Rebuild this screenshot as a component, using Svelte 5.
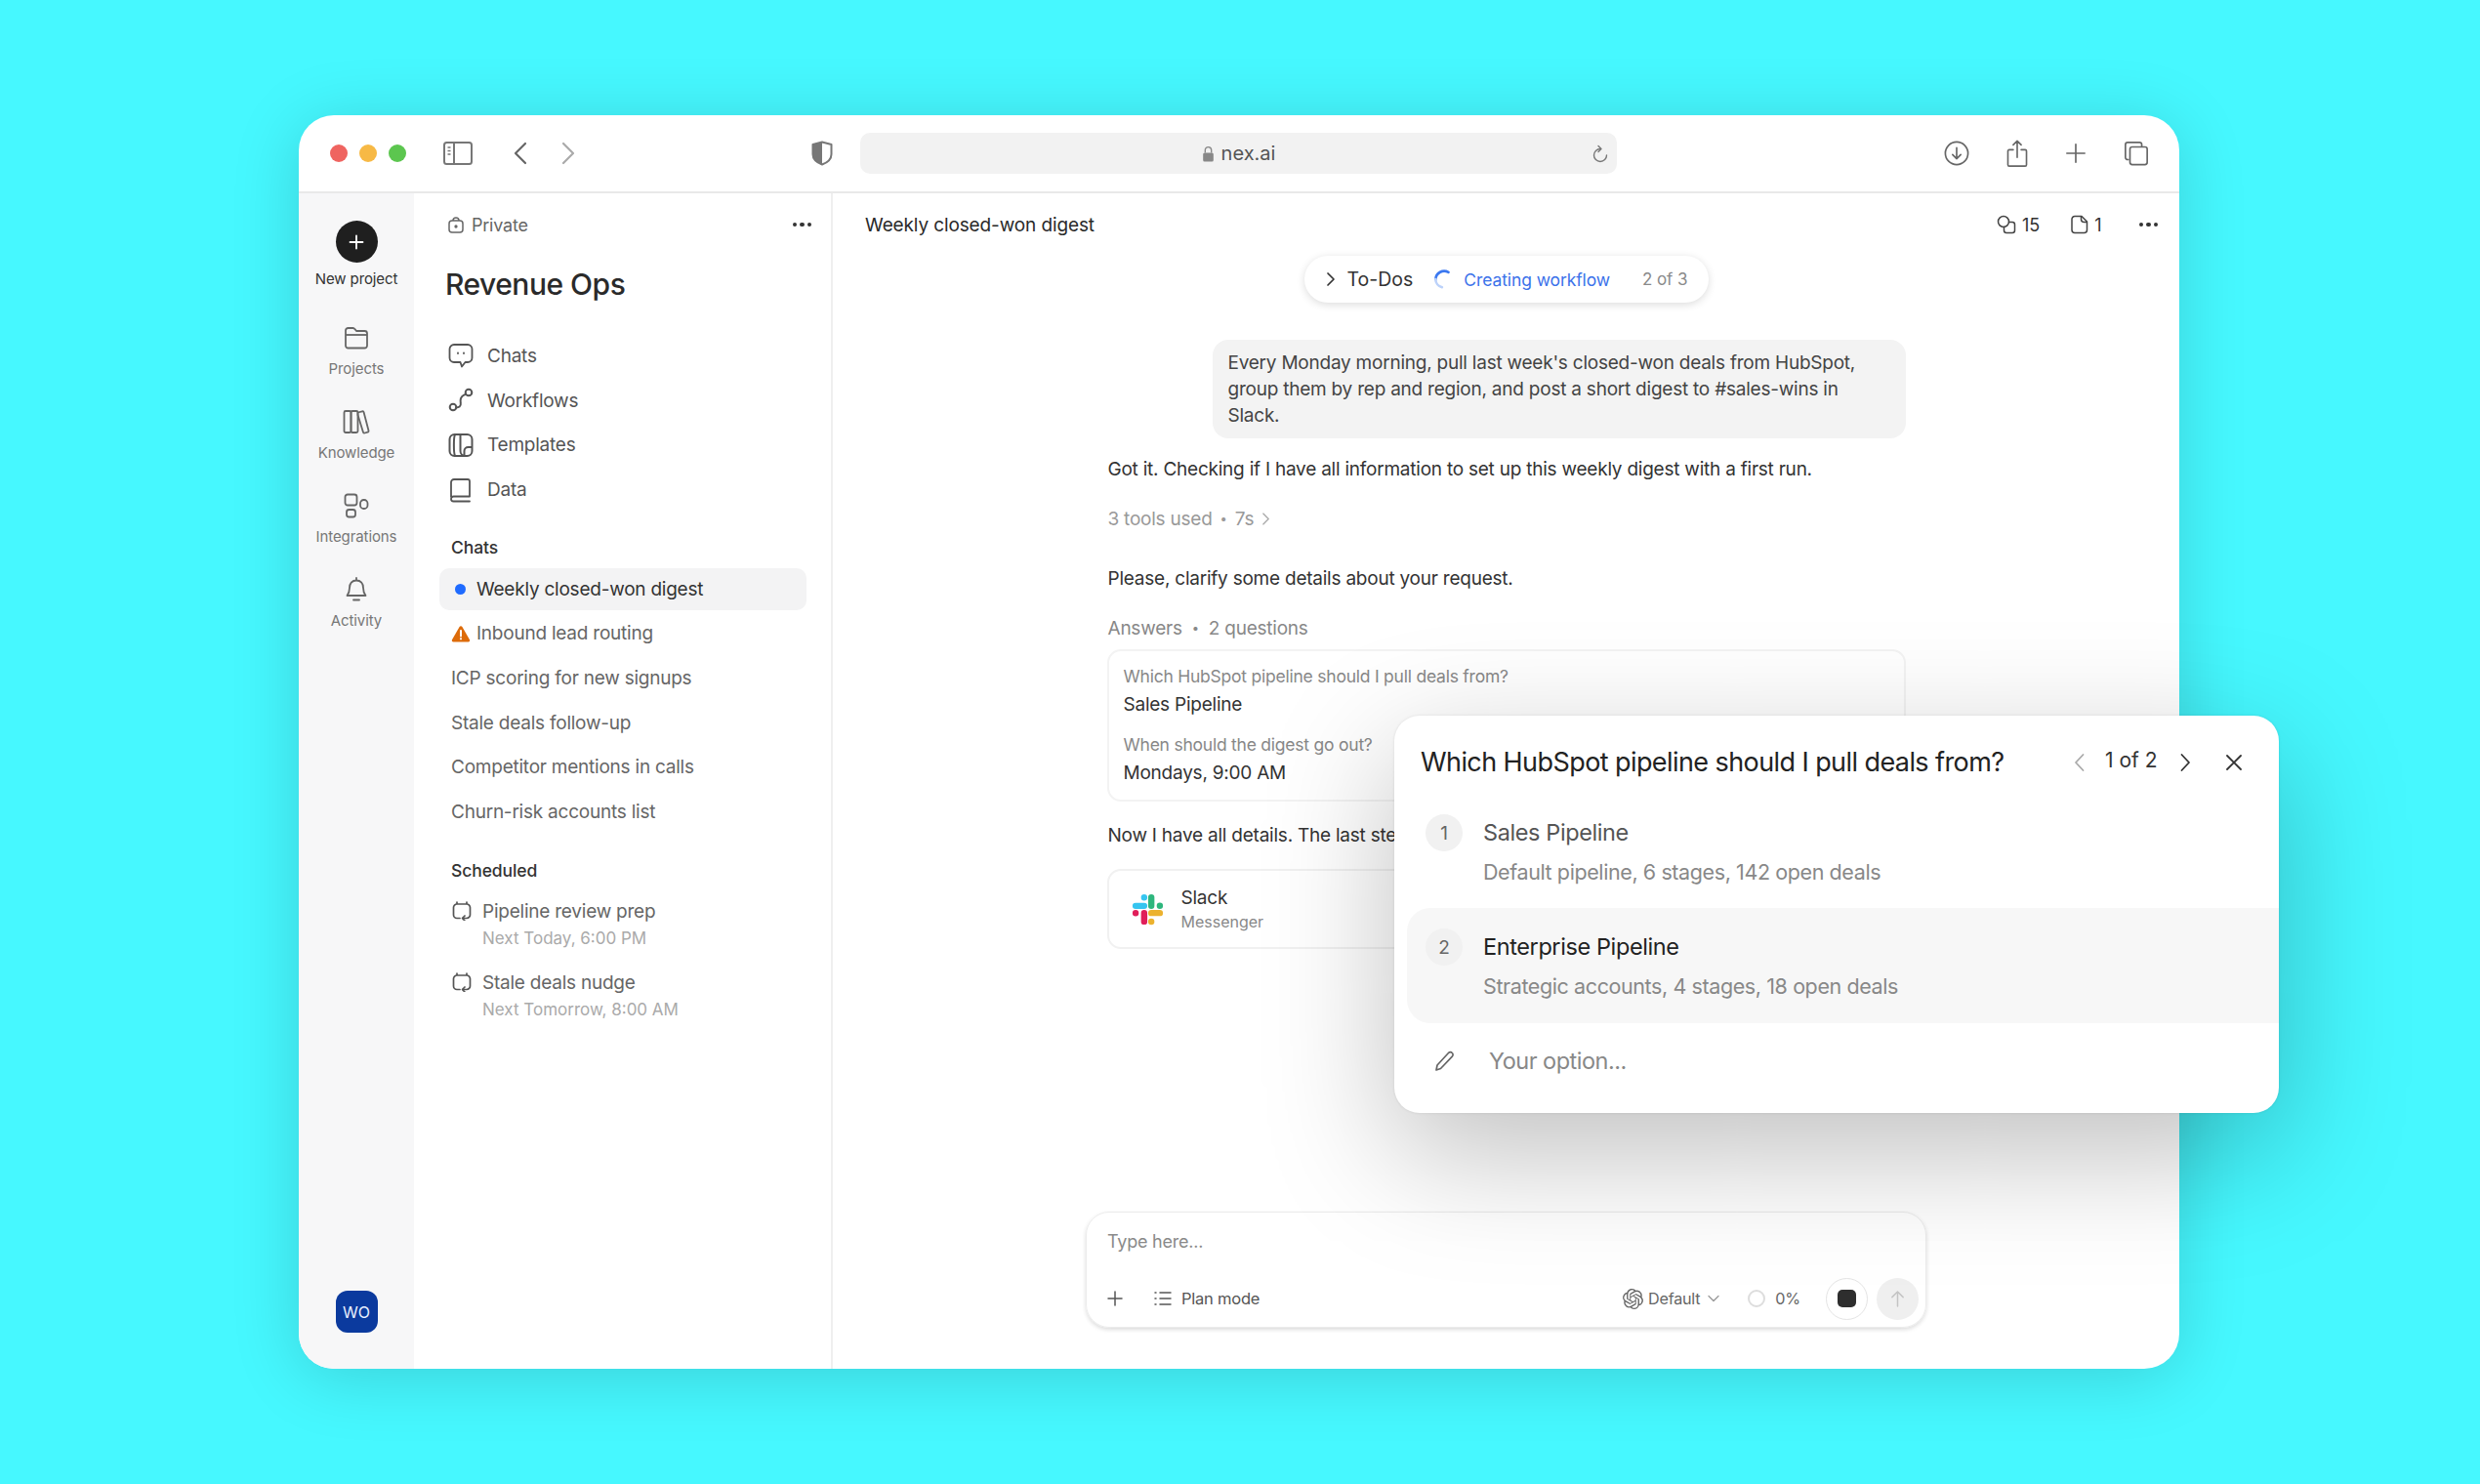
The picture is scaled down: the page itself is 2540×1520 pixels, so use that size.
<script>
  const railItems = [
    { key: 'projects', label: 'Projects' },
    { key: 'knowledge', label: 'Knowledge' },
    { key: 'integrations', label: 'Integrations' },
    { key: 'activity', label: 'Activity' }
  ];
  const nav = ['Chats', 'Workflows', 'Templates', 'Data'];
  const chats = ['ICP scoring for new signups', 'Stale deals follow-up', 'Competitor mentions in calls', 'Churn-risk accounts list'];
  const scheduled = [
    { t: 'Pipeline review prep', s: 'Next Today, 6:00 PM' },
    { t: 'Stale deals nudge', s: 'Next Tomorrow, 8:00 AM' }
  ];
</script>

<div class="window">
  <header class="chrome">
    <div class="lights"><i class="red"></i><i class="yellow"></i><i class="green"></i></div>
    <svg class="ic side" viewBox="0 0 30 26" width="30" height="26" fill="none" stroke="#777" stroke-width="2"><rect x="1" y="2" width="28" height="22" rx="2.5"/><path d="M11 2v22"/><path d="M4.500 7h3M4.500 10.500h3M4.500 14h3" stroke-width="1.500"/></svg>
    <svg class="ic back" viewBox="0 0 16 24" width="16" height="24" fill="none" stroke="#666" stroke-width="2.200" stroke-linecap="round" stroke-linejoin="round"><path d="M13 2 3 12l10 10"/></svg>
    <svg class="ic fwd" viewBox="0 0 16 24" width="16" height="24" fill="none" stroke="#aaa" stroke-width="2.200" stroke-linecap="round" stroke-linejoin="round"><path d="m3 2 10 10L3 22"/></svg>
    <svg class="ic shield" viewBox="0 0 22 26" width="22" height="26"><path d="M11 1.500 20.500 4v10c0 5-4 8.500-9.500 10.500C5.500 22.500 1.500 19 1.500 14V4z" fill="#fff" stroke="#777" stroke-width="2" stroke-linejoin="round"/><path d="M11 1.500 1.500 4v10c0 5 4 8.500 9.500 10.500z" fill="#777"/></svg>
    <div class="url">
      <svg viewBox="0 0 12 16" width="13" height="17"><path d="M3 7V4.500a3 3 0 0 1 6 0V7" fill="none" stroke="#888" stroke-width="1.300"/><rect x="1" y="7" width="10" height="8.500" rx="1.500" fill="#888"/></svg>
      <span>nex.ai</span>
      <svg class="reload" viewBox="0 0 18 20" width="18" height="20" fill="none" stroke="#777" stroke-width="1.400" stroke-linecap="round"><path d="M9 4.500a6.500 6.500 0 1 0 6.500 6.500"/><path d="m7 1.500 3 3-3 3" stroke-linejoin="round"/></svg>
    </div>
    <div class="chrome-right">
      <svg viewBox="0 0 28 28" width="26" height="26" fill="none" stroke="#666" stroke-width="1.800" stroke-linecap="round" stroke-linejoin="round"><circle cx="14" cy="14" r="12.500"/><path d="M14 8v12M9.500 15.500 14 20l4.500-4.500"/></svg>
      <svg viewBox="0 0 24 32" width="22" height="29" fill="none" stroke="#666" stroke-width="1.800" stroke-linecap="round" stroke-linejoin="round"><path d="M7.500 11.500H3a1.500 1.500 0 0 0-1.500 1.500v15.500A1.500 1.500 0 0 0 3 30h18a1.500 1.500 0 0 0 1.500-1.500V13a1.500 1.500 0 0 0-1.500-1.500h-4.500M12 20V2M7.500 6 12 1.500 16.500 6"/></svg>
      <svg viewBox="0 0 24 24" width="22" height="22" fill="none" stroke="#666" stroke-width="1.800" stroke-linecap="round"><path d="M12 2v20M2 12h20"/></svg>
      <svg viewBox="0 0 28 28" width="26" height="26" fill="none" stroke="#666" stroke-width="1.800"><path d="M6 21H4.500A2.500 2.500 0 0 1 2 18.500v-14A2.500 2.500 0 0 1 4.500 2h13A2.500 2.500 0 0 1 20 4.500V7"/><rect x="7" y="7" width="19" height="19.500" rx="2.500"/></svg>
    </div>
  </header>

  <div class="body">
    <nav class="rail">
      <div class="new-btn">
        <svg viewBox="0 0 16 16" width="16" height="16" fill="none" stroke="#fff" stroke-width="1.800" stroke-linecap="round"><path d="M8 1.500v13M1.500 8h13"/></svg>
      </div>
      <div class="new-label">New project</div>
      {#each railItems as r}
        <div class="rail-item">
          {#if r.key === 'projects'}
            <svg viewBox="0 0 26 26" width="26" height="26" fill="none" stroke="#666" stroke-width="1.800" stroke-linejoin="round"><path d="M2 10V5.500A2.500 2.500 0 0 1 4.500 3h5c1 0 1.500.5 2 1.200L13 6h8.500A2.500 2.500 0 0 1 24 8.500V21a2.500 2.500 0 0 1-2.500 2.500h-17A2.500 2.500 0 0 1 2 21z"/><path d="M2 10h22"/></svg>
          {:else if r.key === 'knowledge'}
            <svg viewBox="0 0 28 26" width="28" height="26" fill="none" stroke="#666" stroke-width="1.800" stroke-linejoin="round"><rect x="1.500" y="2" width="7" height="22" rx="1.500"/><rect x="8.500" y="2" width="7" height="22" rx="1.500"/><path d="m15.500 3.500 4.500-1.200c.8-.2 1.400.2 1.600 1L26.500 22c.2.800-.2 1.500-1 1.700l-3 .8c-.8.2-1.400-.2-1.600-1L15.500 6z"/></svg>
          {:else if r.key === 'integrations'}
            <svg viewBox="0 0 26 26" width="26" height="26" fill="none" stroke="#666" stroke-width="1.800"><rect x="1.500" y="1.500" width="12" height="11" rx="2.500"/><rect x="3" y="17" width="9" height="7.500" rx="2.500"/><rect x="17" y="7" width="7.500" height="9" rx="3.500"/></svg>
          {:else}
            <svg viewBox="0 0 24 26" width="24" height="26" fill="none" stroke="#666" stroke-width="1.800" stroke-linecap="round" stroke-linejoin="round"><path d="M12 1v2.500M12 3.500c-4.500 0-7 3.200-7 7.500 0 4-1 6-2.500 8h19c-1.500-2-2.500-4-2.500-8 0-4.300-2.500-7.500-7-7.500zM9 23.500h6"/></svg>
          {/if}
          <span>{r.label}</span>
        </div>
      {/each}
      <div class="avatar">WO</div>
    </nav>

    <aside class="sidebar">
      <div class="private">
        <svg viewBox="0 0 16 18" width="16" height="18" fill="none" stroke="#666" stroke-width="1.500"><rect x="1" y="5" width="14" height="12" rx="3"/><path d="M5 5a3 3 0 0 1 6 0"/><circle cx="8" cy="11" r=".9" fill="#666"/></svg>
        <span>Private</span>
        <div class="dots"><i></i><i></i><i></i></div>
      </div>
      <h1>Revenue Ops</h1>
      <div class="nav">
        {#each nav as n, i}
          <div class="nav-item">
            {#if i === 0}
              <svg viewBox="0 0 26 26" width="26" height="26" fill="none" stroke="#555" stroke-width="1.800" stroke-linejoin="round"><path d="M6 2h14a4.500 4.500 0 0 1 4.500 4.500v9A4.500 4.500 0 0 1 20 20h-2.500L14 24.500 12.500 20H6a4.500 4.500 0 0 1-4.500-4.500v-9A4.500 4.500 0 0 1 6 2z"/><path d="M10 10.500v.5M16 10.500v.5" stroke-linecap="round"/></svg>
            {:else if i === 1}
              <svg viewBox="0 0 26 26" width="26" height="26" fill="none" stroke="#555" stroke-width="2"><circle cx="5" cy="20" r="3.300"/><circle cx="21" cy="5" r="3.300"/><path d="M8.300 20.500c2.500 0 5-1 4.500-4.500-.5-3 .2-6.500 2.700-8 1-.6 1.500-.8 2.300-1.200" stroke-linecap="round"/></svg>
            {:else if i === 2}
              <svg viewBox="0 0 26 26" width="26" height="26" fill="none" stroke="#555" stroke-width="2" stroke-linejoin="round"><rect x="1.500" y="2" width="23" height="22" rx="5"/><path d="M7 2.500c-1.500 2-1.500 19 0 21M12.500 2v17a5 5 0 0 0 5 5M24.500 15h-4a4 4 0 0 0-4 4v5"/></svg>
            {:else}
              <svg viewBox="0 0 26 26" width="26" height="26" fill="none" stroke="#555" stroke-width="1.800" stroke-linejoin="round"><path d="M3 20V5a3 3 0 0 1 3-3h14a2 2 0 0 1 2 2v15.500H5.500A2.500 2.500 0 0 0 3 22a2.500 2.500 0 0 0 2.500 2.500H22" stroke-linecap="round"/></svg>
            {/if}
            <span>{n}</span>
          </div>
        {/each}
      </div>
      <div class="sec first">Chats</div>
      <div class="chat active"><i class="blue-dot"></i><span>Weekly closed-won digest</span></div>
      <div class="chat warn">
        <svg viewBox="0 0 20 18" width="20" height="18"><path d="M10 1.200c.6 0 1.100.3 1.400.8l7.600 13.200c.6 1-.1 2.300-1.300 2.300H2.300c-1.200 0-1.900-1.300-1.300-2.300L8.600 2c.3-.5.800-.8 1.400-.8z" fill="#dd6b0a"/><path d="M10 6v5.500" stroke="#fff" stroke-width="2" stroke-linecap="round"/><circle cx="10" cy="14.300" r="1.100" fill="#fff"/></svg>
        <span>Inbound lead routing</span>
      </div>
      {#each chats as c}
        <div class="chat plain"><span>{c}</span></div>
      {/each}
      <div class="sec second">Scheduled</div>
      {#each scheduled as s}
        <div class="sched">
          <svg viewBox="0 0 20 20" width="20" height="20" fill="none" stroke="#555" stroke-width="1.700" stroke-linecap="round" stroke-linejoin="round"><path d="M5 1v2M15 1v2M8 17.500H5a3.500 3.500 0 0 1-3.500-3.500V6.500A3.500 3.500 0 0 1 5 3h10a3.500 3.500 0 0 1 3.500 3.500V14a3.500 3.500 0 0 1-3.500 3.500h-4"/><path d="M13 15 10.500 17.500 13 20"/></svg>
          <div class="sched-text"><div class="st">{s.t}</div><div class="ss">{s.s}</div></div>
        </div>
      {/each}
    </aside>

    <main class="main">
      <div class="top">
        <div class="title">Weekly closed-won digest</div>
        <div class="top-right">
          <svg viewBox="0 0 20 20" width="20" height="20" fill="none" stroke="#444" stroke-width="1.500"><circle cx="7" cy="7" r="5.500"/><path d="M12.500 7.500H16a2.500 2.500 0 0 1 2.500 2.500v6a2.500 2.500 0 0 1-2.500 2.500h-6A2.500 2.500 0 0 1 7.500 16v-3.500" stroke-linecap="round"/></svg>
          <span class="n15">15</span>
          <svg viewBox="0 0 18 20" width="18" height="20" fill="none" stroke="#444" stroke-width="1.500" stroke-linejoin="round"><path d="M4 1.500h7l5.500 5.500v8.500a3 3 0 0 1-3 3H4a3 3 0 0 1-3-3v-11a3 3 0 0 1 3-3z"/><path d="M10.500 1.500v3a3 3 0 0 0 3 3h3"/></svg>
          <span>1</span>
          <div class="dots mainDots"><i></i><i></i><i></i></div>
        </div>
      </div>

      <div class="chip">
        <svg viewBox="0 0 10 16" width="10" height="16" fill="none" stroke="#333" stroke-width="1.700" stroke-linecap="round" stroke-linejoin="round"><path d="m2 2 6 6-6 6"/></svg>
        <span class="todo">To-Dos</span>
        <svg class="spin" viewBox="0 0 20 20" width="22" height="22" fill="none" stroke-width="2.400" stroke-linecap="round"><path d="M15 3.500A8 8 0 0 0 3 10" stroke="#3b78f0"/><path d="M3 10a8 8 0 0 0 6 7.500" stroke="#bcd2fa"/></svg>
        <span class="creating">Creating workflow</span>
        <span class="of">2 of 3</span>
      </div>

      <div class="column">
        <div class="bubble">Every Monday morning, pull last week's closed-won deals from HubSpot, group them by rep and region, and post a short digest to #sales-wins in Slack.</div>
        <p class="got">Got it. Checking if I have all information to set up this weekly digest with a first run.</p>
        <div class="tools"><span>3 tools used</span><b>•</b><span>7s</span>
          <svg viewBox="0 0 10 16" width="9" height="15" fill="none" stroke="#aaa" stroke-width="1.500" stroke-linecap="round" stroke-linejoin="round"><path d="m2 2 6 6-6 6"/></svg>
        </div>
        <p class="please">Please, clarify some details about your request.</p>
        <div class="answers"><span>Answers</span><b>•</b><span>2 questions</span></div>
        <div class="card">
          <div class="q">Which HubSpot pipeline should I pull deals from?</div>
          <div class="a">Sales Pipeline</div>
          <div class="q q2">When should the digest go out?</div>
          <div class="a">Mondays, 9:00 AM</div>
        </div>
        <p class="now">Now I have all details. The last ste</p>
        <div class="slack">
          <svg viewBox="0 0 24 24" width="35" height="35" fill="none" stroke-width="4.400" stroke-linecap="round"><path d="M9.500 3.500v.1M3.500 9.500h6" stroke="#36c5f0"/><path d="M14.500 3.500v6M20.500 9.400v.1" stroke="#2eb67d"/><path d="M14.500 20.500v.1M14.500 14.500h6" stroke="#ecb22e"/><path d="M9.500 14.500v6M3.500 14.500v.1" stroke="#e01e5a"/></svg>
          <div><div class="sl">Slack</div><div class="sm">Messenger</div></div>
        </div>
      </div>

      <div class="composer">
        <div class="ph">Type here...</div>
        <div class="cbar">
          <svg viewBox="0 0 16 16" width="16" height="16" fill="none" stroke="#555" stroke-width="1.500" stroke-linecap="round"><path d="M8 1v14M1 8h14"/></svg>
          <svg class="list" viewBox="0 0 18 16" width="18" height="16" fill="none" stroke="#555" stroke-width="1.500" stroke-linecap="round"><path d="M1 2h1M1 8h1M1 14h1M6 2h11M6 8h11M6 14h11"/></svg>
          <span class="plan">Plan mode</span>
          <span class="spacer"></span>
          <svg viewBox="0 0 24 24" width="21" height="21" fill="#666"><path d="M22.2819 9.8211a5.9847 5.9847 0 0 0-.5157-4.9108 6.0462 6.0462 0 0 0-6.5098-2.9A6.0651 6.0651 0 0 0 4.9807 4.1818a5.9847 5.9847 0 0 0-3.9977 2.9 6.0462 6.0462 0 0 0 .7427 7.0966 5.98 5.98 0 0 0 .511 4.9107 6.051 6.051 0 0 0 6.5146 2.9001A5.9847 5.9847 0 0 0 13.2599 24a6.0557 6.0557 0 0 0 5.7718-4.2058 5.9894 5.9894 0 0 0 3.9977-2.9001 6.0557 6.0557 0 0 0-.7475-7.0729zm-9.022 12.6081a4.4755 4.4755 0 0 1-2.8764-1.0408l.1419-.0804 4.7783-2.7582a.7948.7948 0 0 0 .3927-.6813v-6.7369l2.02 1.1686a.071.071 0 0 1 .038.052v5.5826a4.504 4.504 0 0 1-4.4945 4.4944zm-9.6607-4.1254a4.4708 4.4708 0 0 1-.5346-3.0137l.142.0852 4.783 2.7582a.7712.7712 0 0 0 .7806 0l5.8428-3.3685v2.3324a.0804.0804 0 0 1-.0332.0615L9.74 19.9502a4.4992 4.4992 0 0 1-6.1408-1.6464zM2.3408 7.8956a4.485 4.485 0 0 1 2.3655-1.9728V11.6a.7664.7664 0 0 0 .3879.6765l5.8144 3.3543-2.0201 1.1685a.0757.0757 0 0 1-.071 0l-4.8303-2.7865A4.504 4.504 0 0 1 2.3408 7.872zm16.5963 3.8558L13.1038 8.364 15.1192 7.2a.0757.0757 0 0 1 .071 0l4.8303 2.7913a4.4944 4.4944 0 0 1-.6765 8.1042v-5.6772a.79.79 0 0 0-.407-.667zm2.0107-3.0231l-.142-.0852-4.7735-2.7818a.7759.7759 0 0 0-.7854 0L9.409 9.2297V6.8974a.0662.0662 0 0 1 .0284-.0615l4.8303-2.7866a4.4992 4.4992 0 0 1 6.6802 4.66zM8.3065 12.863l-2.02-1.1638a.0804.0804 0 0 1-.038-.0567V6.0742a4.4992 4.4992 0 0 1 7.3757-3.4537l-.142.0805L8.704 5.459a.7948.7948 0 0 0-.3927.6813zm1.0976-2.3654l2.602-1.4998 2.6069 1.4998v2.9994l-2.5974 1.4997-2.6067-1.4997Z"/></svg>
          <span class="default">Default</span>
          <svg class="dchev" viewBox="0 0 12 8" width="12" height="8" fill="none" stroke="#999" stroke-width="1.300" stroke-linecap="round" stroke-linejoin="round"><path d="m1 1.500 5 5 5-5"/></svg>
          <i class="ring"></i>
          <span class="pct">0%</span>
          <div class="stop"><i></i></div>
          <div class="send">
            <svg viewBox="0 0 16 20" width="15" height="19" fill="none" stroke="#c4c4c4" stroke-width="1.600" stroke-linecap="round" stroke-linejoin="round"><path d="M8 18V2M2 8l6-6 6 6"/></svg>
          </div>
        </div>
      </div>
    </main>
  </div>

  <section class="popup">
    <div class="p-head">
      <div class="p-title">Which HubSpot pipeline should I pull deals from?</div>
      <svg class="p-prev" viewBox="0 0 12 20" width="12" height="20" fill="none" stroke="#aaa" stroke-width="1.800" stroke-linecap="round" stroke-linejoin="round"><path d="M9.500 2 2 10l7.500 8"/></svg>
      <span class="p-count">1 of 2</span>
      <svg class="p-next" viewBox="0 0 12 20" width="12" height="20" fill="none" stroke="#333" stroke-width="1.800" stroke-linecap="round" stroke-linejoin="round"><path d="m2.500 2 7.500 8-7.500 8"/></svg>
      <svg class="p-close" viewBox="0 0 18 18" width="18" height="18" fill="none" stroke="#333" stroke-width="1.800" stroke-linecap="round"><path d="m2 2 14 14M16 2 2 16"/></svg>
    </div>
    <div class="opt first-opt">
      <div class="num">1</div>
      <div><div class="o-t">Sales Pipeline</div><div class="o-s">Default pipeline, 6 stages, 142 open deals</div></div>
    </div>
    <div class="opt sel">
      <div class="num">2</div>
      <div><div class="o-t">Enterprise Pipeline</div><div class="o-s">Strategic accounts, 4 stages, 18 open deals</div></div>
    </div>
    <div class="your">
      <svg viewBox="0 0 24 24" width="24" height="24" fill="none" stroke="#666" stroke-width="1.700" stroke-linejoin="round" stroke-linecap="round"><path d="M4 16 15.500 3.500a2.600 2.600 0 0 1 3.800 0 2.600 2.600 0 0 1 0 3.700L7.500 19.500 3 21z"/></svg>
      <span>Your option...</span>
    </div>
  </section>
</div>

<style>
  :global(body) { margin: 0; background: #46f8ff; }
  :global(#app) { min-height: 1520px; padding: 118px 0 0 306px; box-sizing: border-box; }
  * { box-sizing: border-box; }
  .window {
    position: relative; width: 1926px; height: 1284px; border-radius: 36px; background: #fff;
    box-shadow: 0 8px 70px rgba(0, 0, 0, .16);
    font-family: Inter, "Liberation Sans", sans-serif; color: #2a2a2a; font-size: 19px; letter-spacing: -.23px;
    display: flex; flex-direction: column;
  }
  .chrome { height: 80px; flex: none; display: flex; align-items: center; border-bottom: 2px solid #e9e9e9; padding-left: 32px; position: relative; }
  .lights { display: flex; gap: 12px; }
  .lights i { width: 18px; height: 18px; border-radius: 50%; }
  .red { background: #ef6460; } .yellow { background: #f7b945; } .green { background: #5cc64f; }
  .ic { flex: none; }
  .side { margin-left: 38px; }
  .back { margin-left: 41px; }
  .fwd { margin-left: 33px; }
  .shield { margin-left: 241px; }
  .url { width: 775px; height: 42px; margin-left: 28px; background: #f2f2f2; border-radius: 10px; display: flex; align-items: center; justify-content: center; gap: 7px; position: relative; color: #555; font-size: 20px; letter-spacing: 0; }
  .reload { position: absolute; right: 8px; top: 12px; }
  .chrome-right { position: absolute; right: 31px; top: 0; height: 78px; display: flex; align-items: center; gap: 38px; }

  .body { flex: 1; display: flex; min-height: 0; }
  .rail { width: 118px; flex: none; background: #f7f7f8; border-bottom-left-radius: 36px; display: flex; flex-direction: column; align-items: center; padding-top: 28px; letter-spacing: -.1px; }
  .new-btn { width: 43px; height: 43px; border-radius: 50%; background: #1f1f1f; display: flex; align-items: center; justify-content: center; }
  .new-label { margin-top: 7px; font-size: 15px; line-height: 20px; color: #333; margin-bottom: 36.500px; }
  .rail-item { height: 86px; display: flex; flex-direction: column; align-items: center; color: #777; font-size: 15px; }
  .rail-item span { margin-top: 9px; line-height: 20px; }
  .rail-item svg { height: 26px; }
  .avatar { margin-top: auto; margin-bottom: 37px; width: 43px; height: 43px; border-radius: 12px; background: #0b3a9e; color: #e8f0ff; font-size: 16px; display: flex; align-items: center; justify-content: center; }

  .sidebar { width: 429px; flex: none; border-right: 2px solid #efefef; padding: 0 20px 0 34px; }
  .private { height: 64px; display: flex; align-items: center; font-size: 18px; color: #666; gap: 8px; padding-left: 1px; position: relative; }
  .dots { display: flex; gap: 3px; margin-left: auto; margin-right: 0; }
  .dots i { width: 4.500px; height: 4.500px; border-radius: 50%; background: #333; }
  h1 { margin: 10px 0 0 -2px; font-size: 30px; font-weight: 500; line-height: 38px; color: #2a2a2a; letter-spacing: -.5px; }
  .nav { margin-top: 31.500px; padding-left: 1px; }
  .nav-item { height: 45.800px; display: flex; align-items: center; gap: 14px; color: #555; font-size: 19px; }
  .sec { font-size: 17.500px; font-weight: 500; color: #333; line-height: 24px; padding-left: 4px; letter-spacing: -.1px; }
  .first { margin-top: 24px; margin-bottom: 9px; }
  .second { margin-top: 27px; margin-bottom: 18px; }
  .chat { height: 43px; display: flex; align-items: center; font-size: 19px; color: #666; margin: 0 0 2.700px -8px; padding-left: 12px; border-radius: 10px; width: 376px; }
  .active { background: #f3f3f4; color: #333; padding-left: 16px; }
  .blue-dot { width: 11px; height: 11px; border-radius: 50%; background: #1f6bff; margin-right: 11px; flex: none; }
  .warn svg { margin-right: 6px; margin-left: 0; }
  .plain { padding-left: 12px; }
  .sched { display: flex; gap: 11px; height: 73px; align-items: flex-start; padding-left: 5px; }
  .sched svg { margin-top: 1px; flex: none; }
  .st { font-size: 19px; line-height: 24px; color: #666; }
  .ss { font-size: 17px; line-height: 24px; color: #aaa; margin-top: 3px; letter-spacing: 0; }

  .main { flex: 1; min-width: 0; display: flex; flex-direction: column; align-items: center; border-bottom-right-radius: 36px; position: relative; }
  .top { width: 100%; height: 64px; display: flex; align-items: center; padding: 0 22px 0 33px; }
  .title { font-size: 19px; color: #2a2a2a; letter-spacing: -.12px; }
  .top-right { margin-left: auto; display: flex; align-items: center; gap: 6px; font-size: 18px; color: #333; letter-spacing: 0; }
  .n15 { margin-right: 26px; }
  .mainDots { margin: 0 0 0 32px; }
  .chip { width: 414px; height: 48px; flex: none; border-radius: 24px; background: #fff; box-shadow: 0 2px 8px rgba(0,0,0,.14); display: flex; align-items: center; padding-left: 22px; font-size: 19.500px; letter-spacing: 0; }
  .todo { margin-left: 12px; color: #333; }
  .spin { margin-left: 20px; }
  .creating { margin-left: 10px; color: #3b72ea; font-size: 17.500px; letter-spacing: -.1px; }
  .of { margin-left: 33px; color: #8a8a8a; font-size: 17px; letter-spacing: -.1px; }
  .column { width: 818px; flex: none; margin-top: 38px; font-size: 19px; line-height: 27px; color: #333; }
  .column p { margin: 0; padding-left: 1px; }
  .bubble { margin-left: 108px; height: 101px; background: #f3f3f3; border-radius: 16px; padding: 10px 16px; color: #444; }
  .got { margin-top: 17.500px !important; }
  .tools { margin-top: 24px; padding-left: 1px; display: flex; align-items: center; gap: 8px; color: #999; height: 27px; }
  .tools b { font-weight: 400; font-size: 13px; }
  .please { margin-top: 34px !important; }
  .answers { margin-top: 24px; padding-left: 1px; display: flex; gap: 10px; color: #888; height: 27px; }
  .answers b { font-weight: 400; font-size: 13px; }
  .card { margin-top: 8.500px; height: 156px; border: 2px solid #f3f3f3; border-radius: 14px; padding: 11px 15px; line-height: 29px; }
  .q { font-size: 17.500px; color: #888; }
  .q2 { margin-top: 12px; }
  .a { font-size: 19px; color: #333; }
  .now { margin-top: 20.500px !important; }
  .slack { margin-top: 21.500px; height: 82px; border: 2px solid #f1f1f1; border-radius: 14px; display: flex; align-items: center; gap: 17px; padding-left: 22px; }
  .sl { font-size: 19px; line-height: 24px; color: #333; padding-top: 2px; }
  .sm { font-size: 16px; line-height: 24px; color: #888; letter-spacing: 0; }

  .composer { margin-top: auto; margin-bottom: 42px; width: 861px; height: 119px; flex: none; border-radius: 24px; border: 1.500px solid #ececec; background: rgba(255,255,255,.55); box-shadow: 0 2px 4px rgba(0,0,0,.14); padding: 17px 7px 0 21px; }
  .ph { font-size: 18px; line-height: 26px; color: #8a8a8a; }
  .cbar { margin-top: 23px; height: 44px; display: flex; align-items: center; }
  .list { margin-left: 32px; }
  .plan { margin-left: 10px; font-size: 16.500px; color: #555; }
  .spacer { flex: 1; }
  .default { margin-left: 5px; font-size: 16.200px; color: #666; }
  .dchev { margin-left: 8px; }
  .ring { margin-left: 29px; width: 18px; height: 18px; border-radius: 50%; border: 2.500px solid #ddd; }
  .pct { margin-left: 10px; font-size: 16.200px; color: #666; }
  .stop { margin-left: 26px; width: 43px; height: 43px; border-radius: 50%; border: 1.500px solid #e4e4e4; background: #fff; display: flex; align-items: center; justify-content: center; }
  .stop i { width: 19px; height: 18px; border-radius: 5px; background: #2e2e2e; }
  .send { margin-left: 9px; width: 43px; height: 43px; border-radius: 50%; background: #efefef; display: flex; align-items: center; justify-content: center; }

  .popup { position: absolute; left: 1122px; top: 615px; width: 906px; height: 407px; border-radius: 26px; background: #fff; box-shadow: 0 0 3px rgba(0,0,0,.1), 0 40px 130px rgba(0,0,0,.26); overflow: hidden; letter-spacing: -.4px; }
  .p-head { height: 94px; display: flex; align-items: center; padding-left: 27px; position: relative; }
  .p-title { font-size: 27px; color: #222; letter-spacing: -.58px; }
  .p-prev { position: absolute; left: 696px; top: 38px; }
  .p-count { position: absolute; left: 728px; top: 31px; font-size: 21px; line-height: 30px; color: #333; letter-spacing: 0; }
  .p-next { position: absolute; left: 804px; top: 38px; }
  .p-close { position: absolute; left: 851px; top: 39px; }
  .opt { margin-left: 13px; padding: 21px 0 0 19px; display: flex; gap: 21px; border-radius: 24px 0 0 24px; }
  .first-opt { height: 103px; padding-top: 7px; }
  .sel { background: #f7f7f7; height: 118px; }
  .num { width: 38px; height: 38px; border-radius: 50%; background: #f1f1f1; display: flex; align-items: center; justify-content: center; font-size: 19px; color: #666; flex: none; letter-spacing: 0; }
  .o-t { font-size: 23.500px; line-height: 38px; color: #555; }
  .sel .o-t { color: #222; }
  .o-s { font-size: 21.500px; line-height: 30px; margin-top: 6px; color: #888; }
  .your { display: flex; align-items: center; gap: 33px; padding-left: 40px; margin-top: 19px; color: #888; font-size: 23.500px; line-height: 40px; letter-spacing: -.5px; }
</style>
